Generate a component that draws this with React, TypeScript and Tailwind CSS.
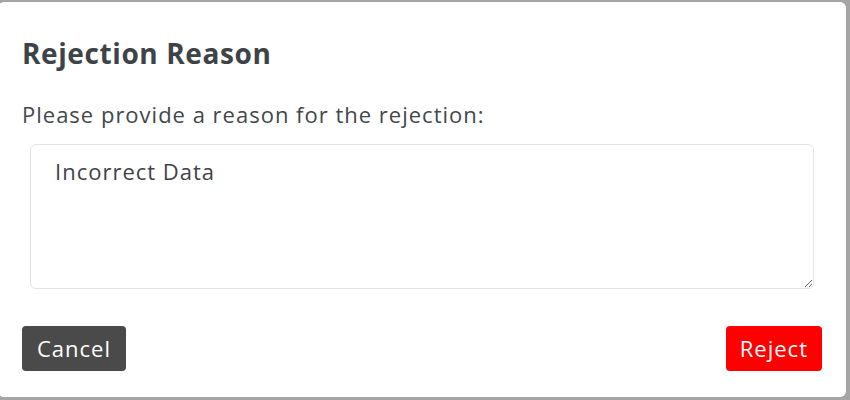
export default function App() {
  return (
    <div className="h-[400px] w-[850px] overflow-hidden bg-[#a5a5a5] pt-[2px] font-['Open_Sans',sans-serif]">
      <div className="-ml-[2px] flex h-[395px] w-[848px] flex-col rounded-[6px] bg-white px-[24px]">
        <h2 className="mt-[34px] text-[28px] font-bold leading-[34px] tracking-[0.6px] text-[#3d4347]">Rejection Reason</h2>
        <p className="mt-[30px] text-[22px] leading-[28px] tracking-[1px] text-[#42484c]">Please provide a reason for the rejection:</p>
        <textarea
          defaultValue="Incorrect Data"
          className="mx-[8px] mt-[16px] h-[145px] resize-y rounded-[6px] border border-[#e3e3e3] px-[24px] py-[12px] text-[22px] leading-[28px] tracking-[1px] text-[#3d4347] outline-none"
        />
        <div className="mt-[37px] flex items-center justify-between">
          <button className="h-[45px] rounded-[4px] bg-[#4a4a4a] px-[15px] text-[22px] tracking-[1px] text-white">Cancel</button>
          <button className="h-[45px] rounded-[4px] bg-[#ff0000] px-[14px] text-[22px] tracking-[1px] text-white">Reject</button>
        </div>
      </div>
    </div>
  );
}
